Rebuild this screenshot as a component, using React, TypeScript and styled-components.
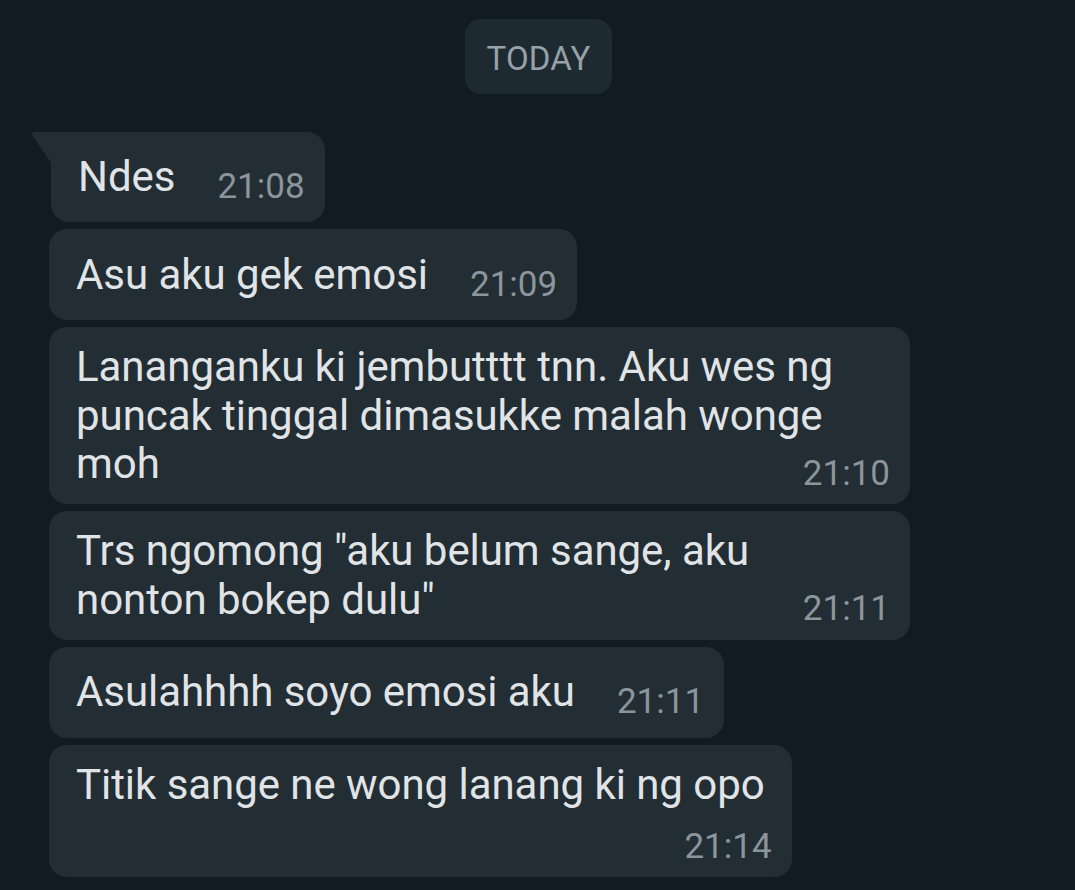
import React from "react";
import styled, { createGlobalStyle, css } from "styled-components";

const Global = createGlobalStyle`
  html, body {
    margin: 0;
    padding: 0;
    background: #121b22;
  }
  body {
    font-family: Roboto, "Noto Sans", "Liberation Sans", sans-serif;
    -webkit-font-smoothing: antialiased;
  }
`;

const Screen = styled.div`
  width: 1075px;
  height: 890px;
  overflow: hidden;
  background: #121b22;
  display: flex;
  flex-direction: column;
  align-items: flex-start;
  padding: 19px 0 0 49px;
  box-sizing: border-box;
`;

const DayPill = styled.div`
  align-self: center;
  margin-left: -47px;
  height: 75px;
  box-sizing: border-box;
  padding: 4px 21px 0;
  border-radius: 16px;
  background: #1e2a31;
  color: #97a1a7;
  font-size: 33px;
  line-height: 71px;
  letter-spacing: 0.2px;
  margin-bottom: 38px;
`;

const List = styled.div`
  display: flex;
  flex-direction: column;
  align-items: flex-start;
  gap: 7px;
`;

type BubbleProps = { $inline?: boolean; $tail?: boolean; $full?: boolean };

const Bubble = styled.div<BubbleProps>`
  position: relative;
  box-sizing: border-box;
  background: #222d34;
  border-radius: 18px;
  color: #e1e4e6;
  ${(p) =>
    p.$inline
      ? css`
          display: flex;
          align-items: flex-end;
          height: 91px;
          padding: 20px 20px 15.5px 27px;
        `
      : css`
          display: flex;
          flex-direction: column;
          padding: 16px 20px 10.5px 27px;
        `}
  ${(p) =>
    p.$full &&
    css`
      width: 861px;
    `}
  ${(p) =>
    p.$tail &&
    css`
      margin-left: 2px;
      height: 90px;
      border-top-left-radius: 0;
      &::before {
        content: "";
        position: absolute;
        left: -20px;
        top: 0;
        width: 21px;
        height: 32px;
        background: #222d34;
        clip-path: polygon(2px 0, 100% 0, 100% 100%, 1px 3px);
      }
    `}
`;

const Text = styled.div<{ $inline?: boolean }>`
  font-size: 42px;
  letter-spacing: -0.05px;
  ${(p) =>
    p.$inline
      ? css`
          line-height: 49px;
          margin-bottom: 6px;
          white-space: nowrap;
        `
      : css`
          line-height: 48.5px;
          padding-right: 7px;
        `}
`;

const Time = styled.div<{ $inline?: boolean; $offset?: number }>`
  font-size: 35px;
  line-height: 41px;
  color: #8c959b;
  white-space: nowrap;
  ${(p) =>
    p.$inline
      ? css`
          margin-left: 42px;
        `
      : css`
          align-self: flex-end;
          margin-top: ${p.$offset ?? -36}px;
        `}
`;

type Msg = {
  lines: string[];
  time: string;
  inline?: boolean;
  tail?: boolean;
  full?: boolean;
  offset?: number;
};

const messages: Msg[] = [
  { lines: ["Ndes"], time: "21:08", inline: true, tail: true },
  { lines: ["Asu aku gek emosi"], time: "21:09", inline: true },
  {
    lines: [
      "Lananganku ki jembutttt tnn. Aku wes ng",
      "puncak tinggal dimasukke malah wonge",
      "moh",
    ],
    time: "21:10",
    full: true,
    offset: -36,
  },
  {
    lines: ['Trs ngomong "aku belum sange, aku', 'nonton bokep dulu"'],
    time: "21:11",
    full: true,
    offset: -36,
  },
  { lines: ["Asulahhhh soyo emosi aku"], time: "21:11", inline: true },
  {
    lines: ["Titik sange ne wong lanang ki ng opo"],
    time: "21:14",
    offset: 16.5,
  },
];

export default function App() {
  return (
    <>
      <Global />
      <Screen>
        <DayPill>TODAY</DayPill>
        <List>
          {messages.map((m, i) => (
            <Bubble key={i} $inline={m.inline} $tail={m.tail} $full={m.full}>
              <Text $inline={m.inline}>
                {m.lines.map((l, j) => (
                  <React.Fragment key={j}>
                    {j > 0 && <br />}
                    {l}
                  </React.Fragment>
                ))}
              </Text>
              <Time $inline={m.inline} $offset={m.offset}>
                {m.time}
              </Time>
            </Bubble>
          ))}
        </List>
      </Screen>
    </>
  );
}
